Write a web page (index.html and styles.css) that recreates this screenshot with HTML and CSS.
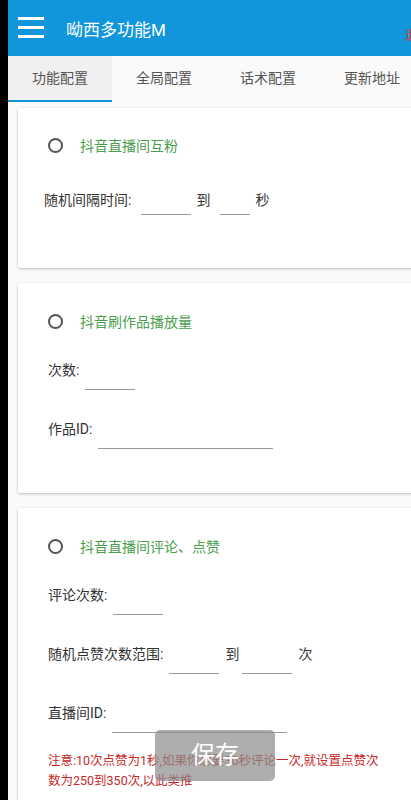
FILE: index.html
```html
<!DOCTYPE html>
<html lang="zh-CN">
<head>
    <meta charset="UTF-8">
    <title>呦西多功能M</title>
    <link rel="stylesheet" href="styles.css">
</head>
<body>

<div class="app">
    <!-- 顶部标题栏 -->
    <div class="toolbar">
        <svg class="menu-icon" width="26" height="22" viewBox="0 0 26 22">
            <rect x="0" y="0" width="26" height="3" fill="#fff"/>
            <rect x="0" y="9" width="26" height="3" fill="#fff"/>
            <rect x="0" y="18" width="26" height="3" fill="#fff"/>
        </svg>
        <span class="toolbar-title">呦西多功能M</span>
        <span class="toolbar-extra">退出</span>
    </div>

    <!-- 选项卡 -->
    <div class="tabs">
        <div class="tab active">功能配置</div>
        <div class="tab">全局配置</div>
        <div class="tab">话术配置</div>
        <div class="tab">更新地址</div>
    </div>

    <div class="content">
        <div class="card card-first">
            <div class="option"><span class="radio"></span>抖音直播间互粉</div>
            <div class="field field-short">
                <span>随机间隔时间:</span>
                <span class="input w50"></span>
                <span>到</span>
                <span class="input w30"></span>
                <span>秒</span>
            </div>
        </div>

        <div class="card card-second">
            <div class="option"><span class="radio"></span>抖音刷作品播放量</div>
            <div class="field">
                <span>次数:</span>
                <span class="input w50"></span>
            </div>
            <div class="field">
                <span>作品ID:</span>
                <span class="input w175"></span>
            </div>
        </div>

        <div class="card">
            <div class="option"><span class="radio"></span>抖音直播间评论、点赞</div>
            <div class="field">
                <span>评论次数:</span>
                <span class="input w50"></span>
            </div>
            <div class="field">
                <span>随机点赞次数范围:</span>
                <span class="input w50"></span>
                <span>到</span>
                <span class="input w50 tight"></span>
                <span>次</span>
            </div>
            <div class="field">
                <span>直播间ID:</span>
                <span class="input w175"></span>
            </div>
            <p class="note">注意:10次点赞为1秒,如果你想要30秒评论一次,就设置点赞次数为250到350次,以此类推</p>
        </div>
    </div>

    <div class="save-btn">保存</div>
</div>

</body>
</html>
```

FILE: styles.css
```css
body {
    margin: 0;
    background-color: #000;
    font-family: Roboto, "Noto Sans CJK SC", sans-serif;
    overflow: hidden;
}

.app {
    position: relative;
    margin-left: 8px;
    width: 440px;
    height: 800px;
    background-color: #fafafa;
    overflow: hidden;
}

.toolbar {
    height: 56px;
    background-color: #1296db;
    display: flex;
    align-items: center;
    padding-left: 10px;
    color: #fff;
}

.menu-icon {
    display: block;
}

.toolbar-title {
    margin-left: 22px;
    font-size: 17px;
}

.toolbar-extra {
    margin-left: auto;
    margin-right: 7px;
    padding-top: 10px;
    color: #e53935;
    font-size: 13px;
    width: 36px;
}

.tabs {
    display: flex;
    background-color: #fafafa;
}

.tab {
    width: 104px;
    height: 44px;
    line-height: 44px;
    text-align: center;
    font-size: 14px;
    color: #555;
    border-bottom: 2px solid transparent;
}

.tab.active {
    background-color: #f0f0f0;
    border-bottom-color: #1296db;
}

.content {
    padding: 6px 0 0 10px;
}

.card {
    background-color: #fff;
    border-radius: 2px;
    box-shadow: 0 1px 3px rgba(0, 0, 0, 0.25);
    margin-bottom: 15px;
    padding: 28px 0 44px 30px;
}

.card-first {
    padding: 27px 0 53px 26px;
}

.option {
    display: flex;
    align-items: center;
    height: 20px;
    font-size: 14px;
    color: #4a9e4e;
}

.card-first .option {
    padding-left: 4px;
    margin-bottom: 35px;
}

.radio {
    width: 11px;
    height: 11px;
    border: 2px solid #555;
    border-radius: 50%;
    margin-right: 17px;
}

.field {
    display: flex;
    align-items: flex-start;
    gap: 6px;
    font-size: 14px;
    line-height: 20px;
    color: #333;
    margin-top: 29px;
}

.card-first .field {
    margin-top: 0;
}

.input {
    display: block;
    height: 29px;
    border-bottom: 1px solid #999;
}

.input.tight {
    margin-left: -3px;
}

.field-short {
    gap: 5px;
}

.field-short .input {
    height: 24px;
    margin-left: 5px;
}

.w30 { width: 30px; }
.w50 { width: 50px; }
.w175 { width: 175px; }

.note {
    margin: 18px 0 0;
    width: 340px;
    font-size: 12.5px;
    line-height: 20px;
    color: #c62828;
}

.save-btn {
    position: absolute;
    left: 147px;
    top: 730px;
    width: 120px;
    height: 51px;
    line-height: 51px;
    border-radius: 5px;
    background-color: rgba(140, 140, 140, 0.7);
    color: #fff;
    font-size: 24px;
    text-align: center;
}
```
